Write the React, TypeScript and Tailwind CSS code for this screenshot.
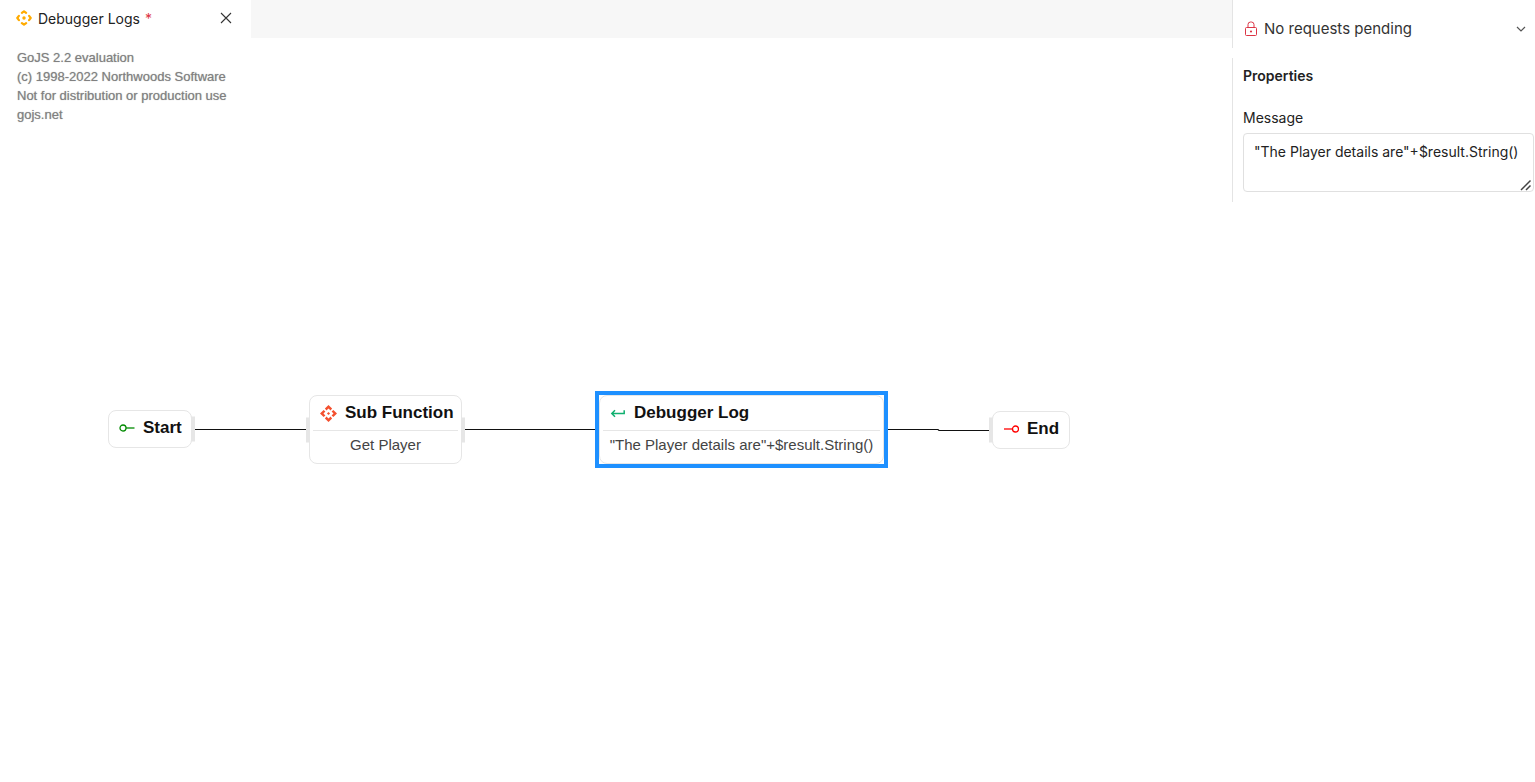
import { useState } from "react";

interface FlowNodeProps {
  title: string;
  detail?: string;
  icon: React.ReactNode;
  className: string;
  selected?: boolean;
  portLeft?: boolean;
  portRight?: boolean;
}

const TabIcon = () => (
  <svg
    viewBox="0 0 16 16"
    className="h-4 w-4 text-[#ffab00]"
    fill="none"
    stroke="currentColor"
    strokeWidth="2.2"
    strokeLinecap="round"
    strokeLinejoin="round"
  >
    <path d="M5.9 2.9 8 1.3l2.1 1.6M5.9 13.1 8 14.7l2.1-1.6M2.9 5.9 1.3 8l1.6 2.1M13.1 5.9 14.7 8l-1.6 2.1" />
    <circle cx="8" cy="8" r="1.7" fill="currentColor" stroke="none" />
  </svg>
);

const SubFunctionIcon = () => (
  <svg viewBox="0 0 16 16" className="h-[17px] w-[17px]" fill="#f4502f">
    <path d="m8 0 3.4 3.4-1.5 1.7L8 3.3 6.1 5.1 4.6 3.4zM8 16l-3.4-3.4 1.5-1.7L8 12.7l1.9-1.8 1.5 1.7z" />
    <path d="m0 8 3.4-3.4 1.7 1.5L3.3 8l1.8 1.9-1.7 1.5zM16 8l-3.4 3.4-1.7-1.5L12.7 8l-1.8-1.9 1.7-1.5z" />
    <path d="m8 6.5 1.5 1.5L8 9.5 6.5 8z" />
  </svg>
);

const StartIcon = () => (
  <svg viewBox="0 0 16 10" className="h-[10px] w-4" fill="none" stroke="#008a00" strokeWidth="1.3">
    <circle cx="4" cy="5" r="3" />
    <path d="M7 5h8.5" />
  </svg>
);

const EndIcon = () => (
  <svg viewBox="0 0 16 10" className="h-[10px] w-4" fill="none" stroke="#ff0000" strokeWidth="1.3">
    <circle cx="12.5" cy="5" r="3" />
    <path d="M1 5h8.5" />
  </svg>
);

const ReturnIcon = () => (
  <svg viewBox="0 0 16 10" className="h-[10px] w-4" fill="none" stroke="#10b070" strokeWidth="1.5">
    <path d="M14.2 2.2v3.3H1.8M5 2.2 1.8 5.5 5 8.8" />
  </svg>
);

const LockIcon = () => (
  <svg viewBox="0 0 14 16" className="h-4 w-[14px]" fill="none" stroke="#dc3545" strokeWidth="1">
    <rect x="1.5" y="6.5" width="11" height="8" rx="1" />
    <path d="M4 6.5V3.6A2.6 2.6 0 0 1 6.6 1h.8A2.6 2.6 0 0 1 10 3.6v2.9" />
    <circle cx="7" cy="10.5" r="1.1" fill="#dc3545" stroke="none" />
  </svg>
);

const FlowNode: React.FC<FlowNodeProps> = ({
  title,
  detail,
  icon,
  className,
  selected,
  portLeft,
  portRight,
}) => (
  <div className={`absolute ${className}`}>
    {portLeft && <span className="absolute top-1/2 -left-[3px] h-[25px] w-1 -translate-y-1/2 bg-[#e6e6e6]" />}
    {portRight && <span className="absolute top-1/2 -right-[3px] h-[25px] w-1 -translate-y-1/2 bg-[#e6e6e6]" />}
    <div className="flex h-full flex-col rounded-lg border border-[#e6e6e6] bg-white">
      <div className="flex h-[34px] items-center gap-2 pl-[10px]">
        {icon}
        <span className="text-[17px] font-bold whitespace-nowrap text-[#111]">{title}</span>
      </div>
      {detail && (
        <p className="mx-[3px] border-t border-[#e6e6e6] pt-1 text-center text-[15px] leading-5 whitespace-nowrap text-[#444]">
          {detail}
        </p>
      )}
    </div>
    {selected && <div className="absolute -inset-1 border-4 border-[#1e90ff]" />}
  </div>
);

const Diagram = () => (
  <main className="relative flex-1 font-['Liberation_Sans',Arial,sans-serif]">
    <p className="px-[17px] pt-[10px] text-[13px] leading-[19px] text-[#808080] [text-shadow:0_0_1px_#aaa]">
      GoJS 2.2 evaluation
      <br />
      (c) 1998-2022 Northwoods Software
      <br />
      Not for distribution or production use
      <br />
      gojs.net
    </p>
    <svg className="absolute top-[386px] left-[195px] h-2 w-[794px]" fill="none" stroke="#111" strokeWidth="1.2">
      <path d="M0 5.5h111M270 5.5h131M692 5.5h51l1 1h50" />
    </svg>
    <FlowNode title="Start" icon={<StartIcon />} portRight className="top-[372px] left-[108px] h-[38px] w-[84px]" />
    <FlowNode
      title="Sub Function"
      detail="Get Player"
      icon={<SubFunctionIcon />}
      portLeft
      portRight
      className="top-[357px] left-[309px] h-[69px] w-[153px]"
    />
    <FlowNode
      title="Debugger Log"
      detail={'"The Player details are"+$result.String()'}
      icon={<ReturnIcon />}
      selected
      className="top-[357px] left-[599px] h-[69px] w-[285px]"
    />
    <FlowNode title="End" icon={<EndIcon />} portLeft className="top-[373px] left-[992px] h-[38px] w-[78px]" />
  </main>
);

const PropertiesPanel = () => {
  const [message, setMessage] = useState('"The Player details are"+$result.String()');

  return (
    <aside className="w-[303px] shrink-0">
      <button className="flex h-12 w-full items-center border-l border-[#e4e4e4] pt-[10px] pr-2 pl-[11px] text-left text-[15px] text-[#333]">
        <LockIcon />
        <span className="ml-[6px] flex-1">No requests pending</span>
        <svg viewBox="0 0 12 8" className="h-2 w-3" fill="none" stroke="#555" strokeWidth="1.2">
          <path d="m2 2 4 4 4-4" />
        </svg>
      </button>
      <section className="mt-[10px] flex flex-col border-l border-[#e4e4e4] pt-2 pr-px pb-[10px] pl-[10px] text-[14px] leading-5 text-[#222]">
        <h2 className="font-semibold">Properties</h2>
        <label htmlFor="message" className="mt-[22px]">
          Message
        </label>
        <div className="relative mt-[5px] flex">
          <textarea
            id="message"
            value={message}
            onChange={(e) => setMessage(e.target.value)}
            className="h-[59px] w-full resize-none overflow-hidden rounded border border-[#e0e0e0] bg-white px-[10px] py-2 outline-none"
          />
          <svg
            viewBox="0 0 12 12"
            className="pointer-events-none absolute right-[2px] bottom-px h-3 w-3"
            fill="none"
            stroke="#444"
            strokeWidth="1.5"
          >
            <path d="m1 11 9.5-9.5M6 11l4.5-4.5" />
          </svg>
        </div>
      </section>
    </aside>
  );
};

const App = () => (
  <div className="flex min-h-screen bg-white font-[Inter,sans-serif]">
    <div className="flex min-w-0 flex-1 flex-col">
      <header className="flex h-[38px] bg-[#f7f7f7]">
        <div className="flex w-[251px] items-center bg-white pr-[18px] pb-[2px] pl-4 text-[14px] text-[#222]">
          <TabIcon />
          <span className="ml-[6px]">Debugger Logs</span>
          <span className="ml-[5px] text-[#dc3545]">*</span>
          <button aria-label="Close" className="ml-auto">
            <svg viewBox="0 0 14 14" className="h-[14px] w-[14px]" fill="none" stroke="#333" strokeWidth="1.1">
              <path d="m2 2 10 10M12 2 2 12" />
            </svg>
          </button>
        </div>
      </header>
      <Diagram />
    </div>
    <PropertiesPanel />
  </div>
);

export default App;
